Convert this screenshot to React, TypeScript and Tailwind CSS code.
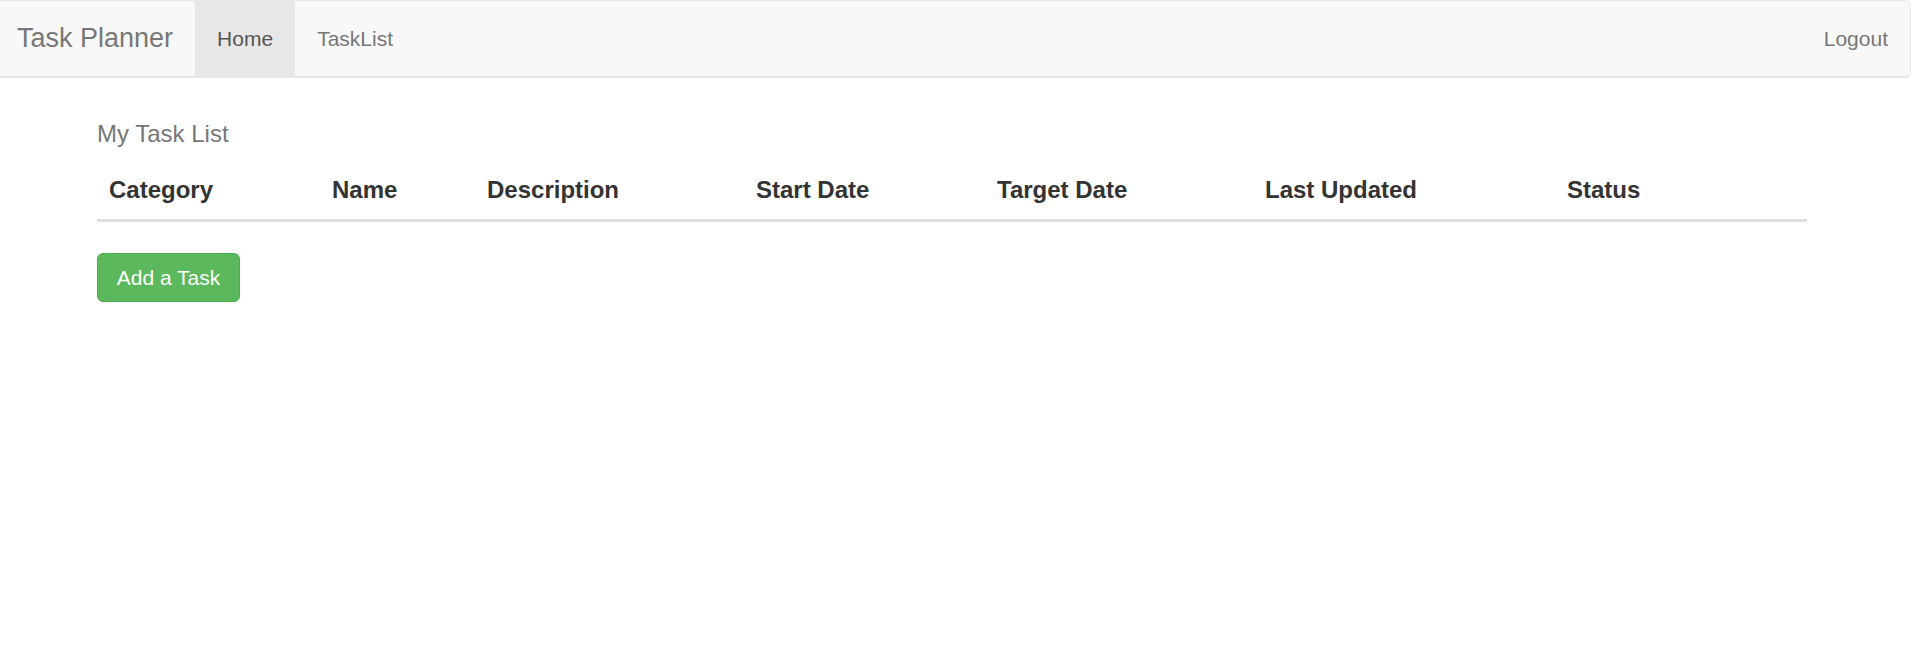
import React from "react";

const cols = [
  { label: "Category", w: "w-[223px]" },
  { label: "Name", w: "w-[155px]" },
  { label: "Description", w: "w-[269px]" },
  { label: "Start Date", w: "w-[241px]" },
  { label: "Target Date", w: "w-[268px]" },
  { label: "Last Updated", w: "w-[302px]" },
  { label: "Status", w: "w-[252px]" },
];

export default function App() {
  return (
    <div className="min-h-[652px] bg-white font-['Liberation_Sans',Arial,sans-serif]">
      <nav className="flex h-[78px] mr-[1px] items-stretch border-t border-b-2 border-r border-[#e7e7e7] rounded-r-[6px] bg-[#f8f8f8]">
        <div className="flex items-center pl-[17px] pr-[22px] text-[27px] leading-none text-[#777]">
          Task Planner
        </div>
        <div className="flex items-center bg-[#e7e7e7] px-[22px] text-[21px] text-[#555]">
          Home
        </div>
        <div className="flex items-center px-[22px] text-[21px] text-[#777]">
          TaskList
        </div>
        <div className="flex-1" />
        <div className="flex items-center pr-[22px] text-[21px] text-[#777]">
          Logout
        </div>
      </nav>

      <div className="pl-[97px]">
        <div className="mt-[39px] text-[24px] leading-[34px] text-[#777]">
          My Task List
        </div>
        <div className="mt-[10px] flex w-[1710px] border-b-[3px] border-[#ddd]">
          {cols.map((c) => (
            <div
              key={c.label}
              className={`${c.w} px-[12px] pt-[12px] pb-[12px] text-[24px] leading-[34px] font-bold text-[#333]`}
            >
              {c.label}
            </div>
          ))}
        </div>
        <button className="mt-[31px] h-[49px] w-[143px] rounded-[6px] border border-[#4cae4c] bg-[#5cb85c] text-[21px] text-white">
          Add a Task
        </button>
      </div>
    </div>
  );
}
